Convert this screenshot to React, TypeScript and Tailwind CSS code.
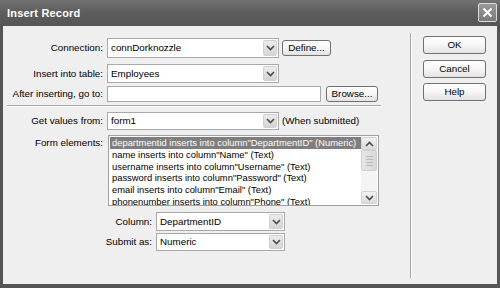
import React from "react";

const Chevron = () => (
  <svg width="9" height="6" viewBox="0 0 9 6">
    <path d="M1 1 L4.5 4.5 L8 1" fill="none" stroke="#4a4a4a" strokeWidth="1.6" />
  </svg>
);

const Select = ({ value, w, h }: { value: string; w: string; h: string }) => (
  <div className={`${w} ${h} flex items-stretch border border-[#a9a9a9] bg-white`}>
    <span className="flex-1 flex items-center pl-[3px] text-black whitespace-nowrap overflow-hidden">{value}</span>
    <span className="w-[14px] my-[1px] mr-[1px] flex items-center justify-center bg-gradient-to-b from-[#ececec] to-[#d4d4d4] border border-[#d0d0d0] rounded-[2px]">
      <Chevron />
    </span>
  </div>
);

const Btn = ({ label, w, h }: { label: string; w: string; h: string }) => (
  <div className={`${w} ${h} flex items-center justify-center rounded-[3px] border border-[#707070] bg-gradient-to-b from-white via-[#f6f6f6] to-[#e2e2e2] text-black`}>
    {label}
  </div>
);

const items = [
  'departmentid inserts into column"DepartmentID" (Numeric)',
  'name inserts into column"Name" (Text)',
  'username inserts into column"Username" (Text)',
  'password inserts into column"Password" (Text)',
  'email inserts into column"Email" (Text)',
  'phonenumber inserts into column"Phone" (Text)',
];

export default function App() {
  return (
    <div className="w-[500px] h-[288px] flex flex-col bg-[#555555] font-['Liberation_Sans',Arial,sans-serif] text-[9.8px] leading-none overflow-hidden">
      {/* Title bar */}
      <div className="h-[26px] flex items-center justify-between pl-[7px] pr-[3px] bg-gradient-to-b from-[#727272] via-[#5c5c5c] to-[#565656]">
        <span className="text-white font-bold text-[11px] tracking-[0.2px]">Insert Record</span>
        <div className="w-[19px] h-[19px] mb-[2px] flex items-center justify-center rounded-[2px] border border-[#dcdcdc] bg-gradient-to-b from-[#9a9a9a] to-[#7a7a7a]">
          <svg width="11" height="11" viewBox="0 0 11 11">
            <path d="M1.5 1.5 L9.5 9.5 M9.5 1.5 L1.5 9.5" stroke="white" strokeWidth="2" />
          </svg>
        </div>
      </div>
      {/* Body */}
      <div className="flex-1 mx-[3px] mb-[4px] bg-[#efefef] flex text-black">
        {/* Left form */}
        <div className="w-[407px] pt-[12px] flex flex-col">
          <div className="flex items-center h-[20px]">
            <span className="w-[100px] text-right">Connection:</span>
            <div className="ml-[4px]"><Select value="connDorknozzle" w="w-[172px]" h="h-[20px]" /></div>
            <div className="ml-[3px]"><Btn label="Define..." w="w-[49px]" h="h-[16px]" /></div>
          </div>
          <div className="flex items-center h-[19px] mt-[6px]">
            <span className="w-[100px] text-right">Insert into table:</span>
            <div className="ml-[4px]"><Select value="Employees" w="w-[172px]" h="h-[19px]" /></div>
          </div>
          <div className="flex items-center h-[16px] mt-[3px]">
            <span className="w-[100px] text-right whitespace-nowrap">After inserting, go to:</span>
            <div className="ml-[4px] w-[214px] h-[16px] border border-[#a9a9a9] bg-white" />
            <div className="ml-[5px]"><Btn label="Browse..." w="w-[52px]" h="h-[16px]" /></div>
          </div>
          <div className="mt-[3px] ml-[4px] w-[374px] border-t border-[#a6a6a6] border-b border-b-white" />
          <div className="flex items-center h-[18px] mt-[5px]">
            <span className="w-[100px] text-right">Get values from:</span>
            <div className="ml-[4px]"><Select value="form1" w="w-[172px]" h="h-[18px]" /></div>
            <span className="ml-[3px]">(When submitted)</span>
          </div>
          <div className="flex items-start mt-[5px]">
            <span className="w-[100px] text-right pt-[3px]">Form elements:</span>
            <div className="ml-[5px] w-[271px] h-[71px] border border-[#a0a0a0] bg-white flex">
              <div className="flex-1 pt-[1px] pl-[1px] overflow-hidden flex flex-col text-[9.4px]">
                {items.map((t, i) => (
                  <div
                    key={i}
                    className={`h-[11.7px] shrink-0 flex items-center pl-[2px] whitespace-nowrap ${i === 0 ? "bg-[#7e7e7e] text-white" : ""}`}
                  >
                    {t}
                  </div>
                ))}
              </div>
              <div className="w-[16px] my-[1px] mr-[1px] flex flex-col bg-[#f4f4f4]">
                <div className="h-[13px] flex items-center justify-center bg-gradient-to-b from-[#f2f2f2] to-[#dadada] border border-[#d2d2d2] rounded-[2px]">
                  <svg width="9" height="6" viewBox="0 0 9 6"><path d="M1 5 L4.5 1.5 L8 5" fill="none" stroke="#4a4a4a" strokeWidth="1.6" /></svg>
                </div>
                <div className="h-[21px] flex flex-col items-center justify-center gap-[2px] bg-gradient-to-r from-[#e6e6e6] to-[#d8d8d8] border border-[#d0d0d0] rounded-[2px]">
                  <div className="w-[7px] h-[1px] bg-[#b8b8b8]" />
                  <div className="w-[7px] h-[1px] bg-[#b8b8b8]" />
                  <div className="w-[7px] h-[1px] bg-[#b8b8b8]" />
                  <div className="w-[7px] h-[1px] bg-[#b8b8b8]" />
                </div>
                <div className="flex-1" />
                <div className="h-[13px] flex items-center justify-center bg-gradient-to-b from-[#f2f2f2] to-[#dadada] border border-[#d2d2d2] rounded-[2px]">
                  <Chevron />
                </div>
              </div>
            </div>
          </div>
          <div className="flex items-center h-[19px] mt-[6px]">
            <span className="w-[149px] text-right">Column:</span>
            <div className="ml-[4px]"><Select value="DepartmentID" w="w-[129px]" h="h-[19px]" /></div>
          </div>
          <div className="flex items-center h-[18px] mt-[2px]">
            <span className="w-[149px] text-right">Submit as:</span>
            <div className="ml-[4px]"><Select value="Numeric" w="w-[129px]" h="h-[18px]" /></div>
          </div>
        </div>
        {/* Right */}
        <div className="flex">
          <div className="mt-[7px] mb-[6px] w-[2px] border-l border-[#a6a6a6] border-r border-r-white" />
          <div className="ml-[11px] pt-[10px] flex flex-col">
            <Btn label="OK" w="w-[63px]" h="h-[18px]" />
            <div className="mt-[6px]"><Btn label="Cancel" w="w-[63px]" h="h-[18px]" /></div>
            <div className="mt-[5px]"><Btn label="Help" w="w-[63px]" h="h-[18px]" /></div>
          </div>
        </div>
      </div>
    </div>
  );
}
